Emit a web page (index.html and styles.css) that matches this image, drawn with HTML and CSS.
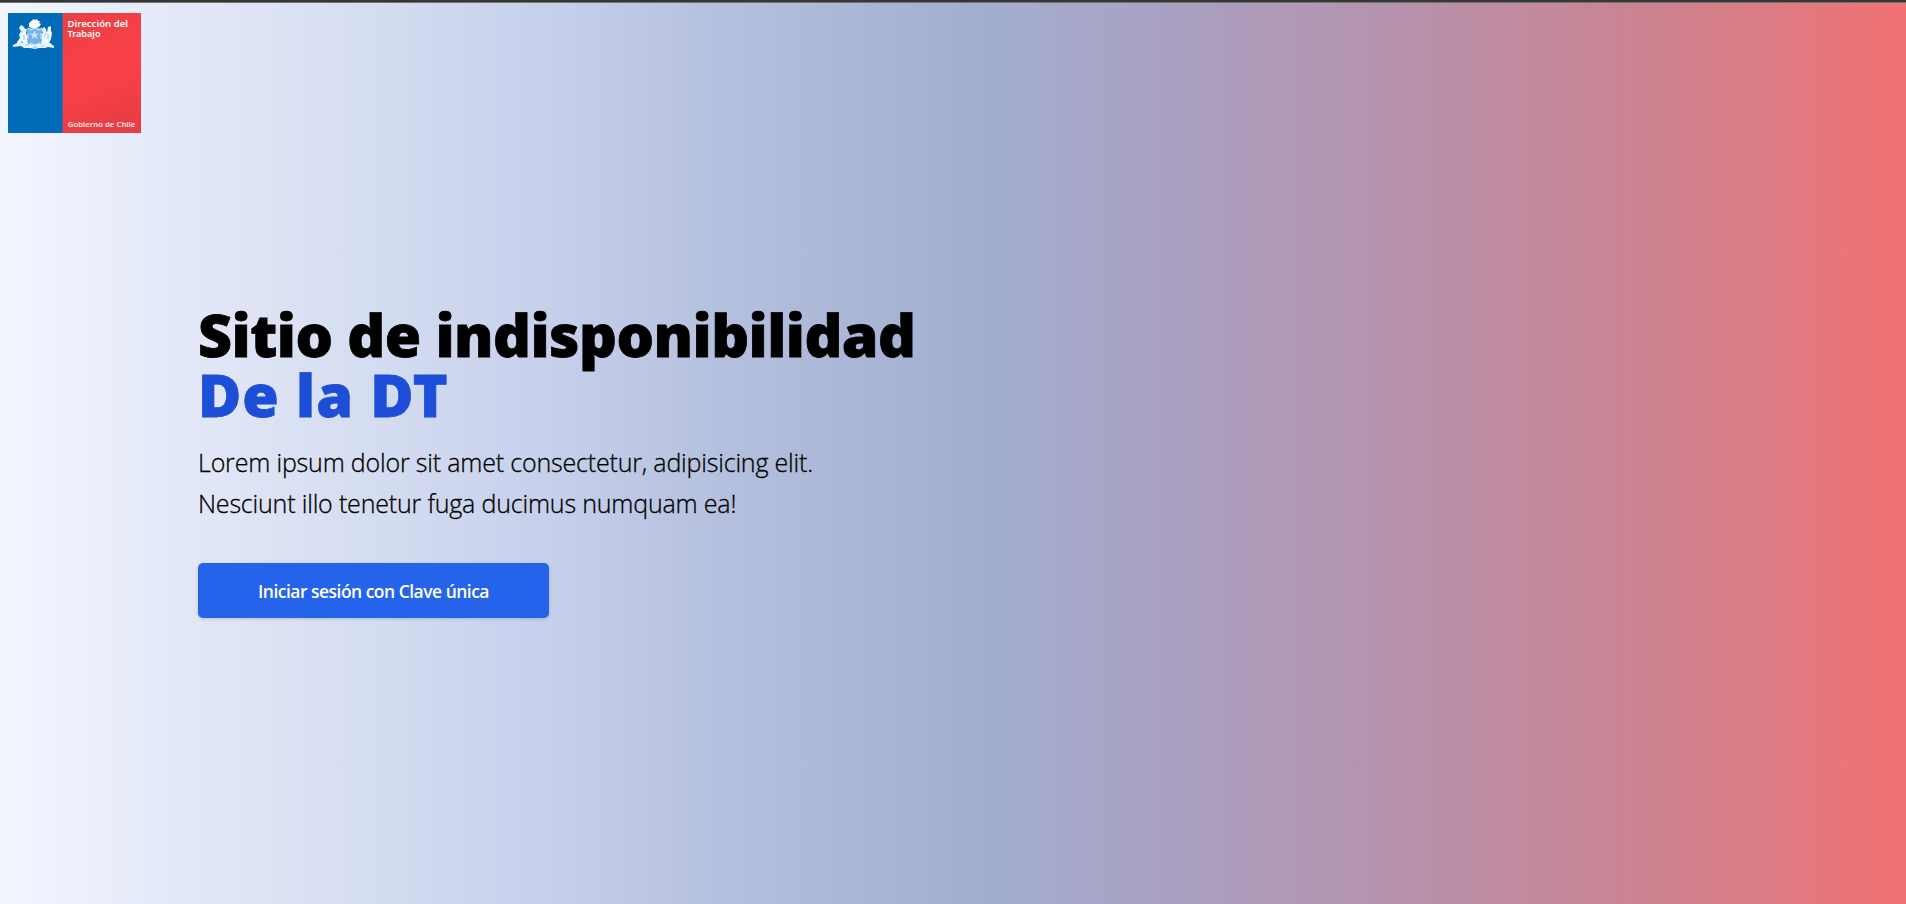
FILE: index.html
```html
<!DOCTYPE html>
<html lang="es">
<head>
<meta charset="utf-8">
<title>Sitio de indisponibilidad</title>
<link rel="stylesheet" href="styles.css">
</head>
<body>
<header class="header">
  <svg class="logo" viewBox="0 0 133 120" role="img" aria-label="Dirección del Trabajo">
    <defs>
      <linearGradient id="red" x1="0" y1="0" x2="0.25" y2="1">
        <stop offset="0" stop-color="#e83f45"/><stop offset=".5" stop-color="#fa4046"/><stop offset=".7" stop-color="#f64046"/><stop offset="1" stop-color="#ea3d43"/>
      </linearGradient>
    </defs>
    <rect width="55" height="120" fill="#006cb7"/>
    <rect x="54" width="79" height="120" fill="url(#red)"/>
    <rect x="54" width="1" height="120" fill="#675c88"/>
    <g class="crest">
      <path d="M21 14l0-4 2-1-1-1 2 0 1-2 2 1 2-1 1 2 2 0-1 2 2 1-2 3-5 2z" fill="#fff"/>
      <path d="M9 29l3-4-1-3 2-4-2-3 2-3 3 2 1 2 2 0-1 4 2 5 0 6-4 2-2-5-3 4z" fill="#f3f9ff"/>
      <path d="M33 31l0-8 2-4-2-2 3-3 2 2 1 4 1-6 3-1 0 5 1 2-1 6-2 4 1 3-5 1-1-4z" fill="#f3f9ff"/>
      <path d="M19 15h15v12q0 5-7.500 7q-7.500-2-7.500-7z" fill="#74b3e5"/>
      <path d="M20 15l3 2 4-2 4 2 3-2M20 20v6M33 20v6M22 30l5 2 5-2" fill="none" stroke="#d9edff" stroke-width="1"/>
      <path d="M26.500 17.500l1.200 3.200h3.400l-2.700 2 1 3.300-2.900-2-2.900 2 1-3.300-2.700-2h3.400z" fill="#c8e3fa"/>
      <path d="M5 32l4-2 1-2 5 2 5 1 7 1 8-2 5-1 2 1 4 3 0 2-6-1-3 1-6 0-4 1-5-1-6 0-3-2-8 1z" fill="#e7f4ff"/>
      <path d="M14 17v3M16 22v5M38 20l-2 4M40 21v5M17 32h3M25 34h4M33 33h3" stroke="#78b5e4" stroke-width=".8"/>
    </g>
    <text class="logo-text" x="59.500" y="13.600" textLength="60.500" lengthAdjust="spacingAndGlyphs">Dirección del</text>
    <text class="logo-text" x="59.500" y="23.800" textLength="33" lengthAdjust="spacingAndGlyphs">Trabajo</text>
    <text class="logo-foot" x="59.800" y="113.800" textLength="67.500" lengthAdjust="spacingAndGlyphs">Gobierno de Chile</text>
  </svg>
</header>
<main class="hero">
  <h1 class="title"><span class="title-main">Sitio de indisponibilidad</span><strong class="title-accent">De la DT</strong></h1>
  <p class="lead"><span class="lead-first">Lorem ipsum dolor sit amet consectetur, adipisicing elit.</span><span class="lead-second">Nesciunt illo tenetur fuga ducimus numquam ea!</span></p>
  <a class="button" href="#"><span>Iniciar sesión con Clave única</span></a>
</main>
</body>
</html>
```
FILE: styles.css
```css
* { box-sizing: border-box; }
html { height: 100%; }
body {
  margin: 0;
  height: 100%;
  overflow: hidden;
  border-top: 2px solid #363636;
  background: linear-gradient(90deg, #f3f6ff 0%, #e4e9f8 9%, #d4dcf1 20%, #c8d1ec 28%, #b5c0de 38%, #a2aecf 51.500%, #a9a1c3 61%, #b791ab 74%, #cb8391 86%, #dc7b83 93%, #e97579 97%, #f17273 100%);
  color: #000;
  font-family: "Open Sans", "Noto Sans", sans-serif;
}
.header { padding: 10px 8px 0; border-top: 1px solid #737373; }
.logo { display: block; width: 133px; height: 120px; }
.logo-text { font: 600 9.400px "Noto Sans", sans-serif; fill: #fff; }
.logo-foot { font: 600 7.900px "Noto Sans", sans-serif; fill: #ffe9e9; }
.hero {
  display: flex;
  flex-direction: column;
  align-items: flex-start;
  padding: 171px 0 0 198px;
}
.title {
  margin: 0;
  font-family: "Noto Sans", "Open Sans", sans-serif;
  font-size: 59px;
  line-height: 60px;
  font-weight: 900;
  white-space: nowrap;
  -webkit-text-stroke: .8px currentColor;
}
.title span, .title strong { display: block; font-weight: 900; }
.title-main { letter-spacing: -.530px; }
.title-accent { color: #1d4ed8; letter-spacing: 1px; }
.lead {
  margin: 18px 0 0;
  font-size: 25px;
  font-weight: 300;
  line-height: 40.625px;
  letter-spacing: -.18px;
  white-space: nowrap;
  -webkit-text-stroke: .3px currentColor;
}
.lead span { display: block; }
.button {
  display: flex;
  align-items: center;
  justify-content: center;
  width: 351px;
  height: 55px;
  margin-top: 40px;
  border-radius: 5px;
  background: #2563eb;
  box-shadow: 0 1px 4px rgba(0, 0, 0, .12), 0 1px 2px rgba(0, 0, 0, .06);
  color: #fff;
  font-size: 17.500px;
  font-weight: 600;
  letter-spacing: -.52px;
  text-decoration: none;
  white-space: nowrap;
}
```
